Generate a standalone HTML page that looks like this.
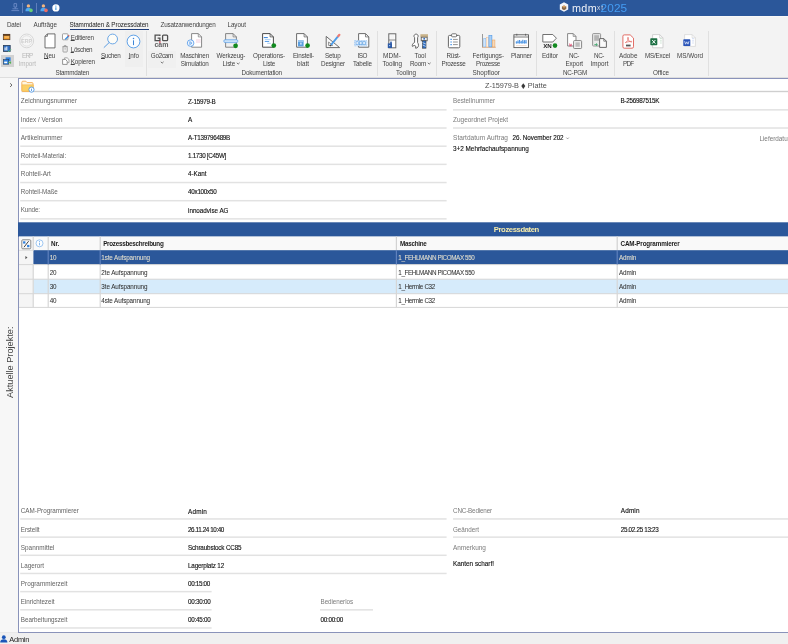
<!DOCTYPE html>
<html><head><meta charset="utf-8"><title>mdm 2025</title>
<style>
html,body{margin:0;padding:0;overflow:hidden}
body{width:788px;height:644px;position:relative;overflow:hidden;background:#fff;font-family:"Liberation Sans",sans-serif}
#r{position:absolute;left:0;top:0;width:788px;height:644px;overflow:hidden;will-change:transform;filter:blur(0.35px)}
#r>div,#r>span,#r>svg{position:absolute;display:block}
#r>span{white-space:nowrap}
u{text-decoration:underline;text-decoration-skip-ink:none;text-underline-offset:0.3px;text-decoration-thickness:0.65px}
</style></head><body>
<div id="r">
<div style="left:0px;top:0px;width:788px;height:16px;background:#2b579a;"></div>
<div style="left:0px;top:16px;width:788px;height:62px;background:#f3f3f3;"></div>
<div style="left:0px;top:77px;width:788px;height:1px;background:#dedede;"></div>
<div style="left:0px;top:16px;width:788px;height:1px;background:#f8f8f8;"></div>
<div style="left:0px;top:78px;width:18px;height:555px;background:#f7f7f7;"></div>
<div style="left:0px;top:632px;width:18px;height:1px;background:#e9e9e9;"></div>
<div style="left:18px;top:78px;width:1px;height:555px;background:#8a93ba;"></div>
<div style="left:18px;top:78px;width:770px;height:1px;background:#8a93ba;"></div>
<div style="left:0px;top:633px;width:788px;height:11px;background:#f0f0f0;"></div>
<div style="left:18px;top:632px;width:770px;height:1px;background:#8a93ba;"></div>
<svg style="left:0;top:0" width="788" height="644" viewBox="0 0 788 644"><rect x="21.5" y="90.80" width="766.5" height="1.4" fill="#cfcfcf"/><rect x="20.2" y="109.10" width="426.40000000000003" height="1.5" fill="#e2e2e2"/><rect x="20.2" y="127.27" width="426.40000000000003" height="1.5" fill="#e2e2e2"/><rect x="20.2" y="145.44" width="426.40000000000003" height="1.5" fill="#e2e2e2"/><rect x="20.2" y="163.61" width="426.40000000000003" height="1.5" fill="#e2e2e2"/><rect x="20.2" y="181.78" width="426.40000000000003" height="1.5" fill="#e2e2e2"/><rect x="20.2" y="199.95" width="426.40000000000003" height="1.5" fill="#e2e2e2"/><rect x="20.2" y="218.12" width="426.40000000000003" height="1.5" fill="#e2e2e2"/><rect x="453" y="109.10" width="335" height="1.5" fill="#e2e2e2"/><rect x="453" y="127.27" width="335" height="1.5" fill="#e2e2e2"/><rect x="20.2" y="518.20" width="426.40000000000003" height="1.5" fill="#e2e2e2"/><rect x="20.2" y="536.37" width="426.40000000000003" height="1.5" fill="#e2e2e2"/><rect x="20.2" y="554.54" width="426.40000000000003" height="1.5" fill="#e2e2e2"/><rect x="20.2" y="572.71" width="426.40000000000003" height="1.5" fill="#e2e2e2"/><rect x="20.2" y="590.88" width="191.4" height="1.5" fill="#e2e2e2"/><rect x="20.2" y="609.05" width="191.4" height="1.5" fill="#e2e2e2"/><rect x="20.2" y="627.22" width="191.4" height="1.5" fill="#e2e2e2"/><rect x="320" y="609.10" width="53" height="1.5" fill="#e2e2e2"/><rect x="453" y="518.20" width="335" height="1.5" fill="#e2e2e2"/><rect x="453" y="536.37" width="335" height="1.5" fill="#e2e2e2"/></svg>
<span style="left:485.00px;top:80.70px;font-size:7.30px;line-height:10px;color:#505050;letter-spacing:-0.066px;">Z-15979-B</span>
<span style="left:527.80px;top:80.70px;font-size:7.30px;line-height:10px;color:#505050;letter-spacing:0.089px;">Platte</span>
<svg style="left:521.4px;top:82.6px;overflow:visible" width="5" height="6.4" viewBox="0 0 5 6.4"><path d="M2.3 0.2 L4.3 3.1 L2.3 6 L0.3 3.1 Z" fill="#3a3a3a"/></svg>
<span style="left:20.80px;top:96.40px;font-size:6.36px;line-height:10px;color:#636363;">Zeichnungsnummer</span>
<span style="left:188.00px;top:96.70px;font-size:6.30px;line-height:10px;color:#111;letter-spacing:-0.241px;-webkit-text-stroke:0.12px #111;">Z-15979-B</span>
<span style="left:20.80px;top:114.50px;font-size:6.30px;line-height:10px;color:#636363;">Index / Version</span>
<span style="left:188.00px;top:114.80px;font-size:6.40px;line-height:10px;color:#111;-webkit-text-stroke:0.12px #111;">A</span>
<span style="left:20.80px;top:132.70px;font-size:6.47px;line-height:10px;color:#636363;">Artikelnummer</span>
<span style="left:188.00px;top:133.00px;font-size:6.30px;line-height:10px;color:#111;letter-spacing:-0.299px;-webkit-text-stroke:0.12px #111;">A-T139796489B</span>
<span style="left:20.80px;top:151.00px;font-size:6.30px;line-height:10px;color:#636363;letter-spacing:-0.027px;">Rohteil-Material:</span>
<span style="left:188.00px;top:151.30px;font-size:6.30px;line-height:10px;color:#111;letter-spacing:-0.310px;-webkit-text-stroke:0.12px #111;">1.1730 [C45W]</span>
<span style="left:20.80px;top:169.00px;font-size:6.37px;line-height:10px;color:#636363;">Rohteil-Art</span>
<span style="left:188.00px;top:169.30px;font-size:6.30px;line-height:10px;color:#111;letter-spacing:-0.010px;-webkit-text-stroke:0.12px #111;">4-Kant</span>
<span style="left:20.80px;top:187.10px;font-size:6.30px;line-height:10px;color:#636363;letter-spacing:-0.068px;">Rohteil-Maße</span>
<span style="left:188.00px;top:187.40px;font-size:6.30px;line-height:10px;color:#111;letter-spacing:-0.258px;-webkit-text-stroke:0.12px #111;">40x100x50</span>
<span style="left:20.80px;top:205.20px;font-size:6.30px;line-height:10px;color:#636363;letter-spacing:-0.128px;">Kunde:</span>
<span style="left:188.00px;top:205.50px;font-size:6.30px;line-height:10px;color:#111;letter-spacing:-0.010px;-webkit-text-stroke:0.12px #111;">innoadvise AG</span>
<span style="left:453.00px;top:96.40px;font-size:6.30px;line-height:10px;color:#7a7a7a;">Bestellnummer</span>
<span style="left:620.50px;top:96.40px;font-size:6.30px;line-height:10px;color:#111;letter-spacing:-0.278px;-webkit-text-stroke:0.12px #111;">B-256987515K</span>
<span style="left:453.00px;top:114.60px;font-size:6.47px;line-height:10px;color:#7a7a7a;">Zugeordnet Projekt</span>
<span style="left:453.00px;top:132.90px;font-size:6.50px;line-height:10px;color:#7a7a7a;letter-spacing:0.045px;">Startdatum Auftrag</span>
<span style="left:512.50px;top:133.40px;font-size:6.30px;line-height:10px;color:#111;letter-spacing:-0.046px;-webkit-text-stroke:0.12px #111;">26. November 202</span>
<span style="left:759.40px;top:133.60px;font-size:6.36px;line-height:10px;color:#7a7a7a;">Lieferdatum</span>
<span style="left:453.00px;top:144.40px;font-size:6.37px;line-height:10px;color:#111;-webkit-text-stroke:0.12px #111;">3+2 Mehrfachaufspannung</span>
<svg style="left:566px;top:136.8px;overflow:visible" width="4" height="3" viewBox="0 0 4 3"><path d="M0.4 0.6 L1.6 1.9 L2.8 0.6" fill="none" stroke="#777" stroke-width="0.7"/></svg>
<span style="left:20.80px;top:506.20px;font-size:6.31px;line-height:10px;color:#636363;">CAM-Programmierer</span>
<span style="left:188.00px;top:506.50px;font-size:6.40px;line-height:10px;color:#111;letter-spacing:0.172px;-webkit-text-stroke:0.12px #111;">Admin</span>
<span style="left:20.80px;top:524.60px;font-size:6.30px;line-height:10px;color:#636363;letter-spacing:-0.069px;">Erstellt</span>
<span style="left:188.00px;top:524.90px;font-size:6.30px;line-height:10px;color:#111;letter-spacing:-0.398px;-webkit-text-stroke:0.12px #111;">26.11.24 10:40</span>
<span style="left:20.80px;top:542.50px;font-size:6.38px;line-height:10px;color:#636363;">Spannmittel</span>
<span style="left:188.00px;top:542.80px;font-size:6.30px;line-height:10px;color:#111;letter-spacing:-0.149px;-webkit-text-stroke:0.12px #111;">Schraubstock CC85</span>
<span style="left:20.80px;top:560.70px;font-size:6.30px;line-height:10px;color:#636363;letter-spacing:-0.033px;">Lagerort</span>
<span style="left:188.00px;top:561.00px;font-size:6.30px;line-height:10px;color:#111;letter-spacing:-0.168px;-webkit-text-stroke:0.12px #111;">Lagerplatz 12</span>
<span style="left:20.80px;top:578.70px;font-size:6.37px;line-height:10px;color:#636363;">Programmierzeit</span>
<span style="left:188.00px;top:579.00px;font-size:6.30px;line-height:10px;color:#111;letter-spacing:-0.315px;-webkit-text-stroke:0.12px #111;">00:15:00</span>
<span style="left:20.80px;top:597.00px;font-size:6.30px;line-height:10px;color:#636363;letter-spacing:-0.047px;">Einrichtezeit</span>
<span style="left:188.00px;top:597.30px;font-size:6.30px;line-height:10px;color:#111;letter-spacing:-0.253px;-webkit-text-stroke:0.12px #111;">00:30:00</span>
<span style="left:20.80px;top:615.10px;font-size:6.30px;line-height:10px;color:#636363;letter-spacing:-0.014px;">Bearbeitungszeit</span>
<span style="left:188.00px;top:615.40px;font-size:6.30px;line-height:10px;color:#111;letter-spacing:-0.253px;-webkit-text-stroke:0.12px #111;">00:45:00</span>
<span style="left:320.50px;top:597.30px;font-size:6.30px;line-height:10px;color:#7a7a7a;letter-spacing:-0.070px;">Bedienerlos</span>
<span style="left:320.50px;top:615.10px;font-size:6.30px;line-height:10px;color:#111;letter-spacing:-0.253px;-webkit-text-stroke:0.12px #111;">00:00:00</span>
<span style="left:453.00px;top:506.30px;font-size:6.30px;line-height:10px;color:#7a7a7a;letter-spacing:-0.164px;">CNC-Bediener</span>
<span style="left:620.80px;top:506.30px;font-size:6.40px;line-height:10px;color:#111;letter-spacing:0.132px;-webkit-text-stroke:0.12px #111;">Admin</span>
<span style="left:453.00px;top:524.60px;font-size:6.30px;line-height:10px;color:#7a7a7a;letter-spacing:-0.033px;">Geändert</span>
<span style="left:620.80px;top:524.60px;font-size:6.30px;line-height:10px;color:#111;letter-spacing:-0.310px;-webkit-text-stroke:0.12px #111;">25.02.25 13:23</span>
<span style="left:453.00px;top:542.60px;font-size:6.45px;line-height:10px;color:#7a7a7a;">Anmerkung</span>
<span style="left:453.00px;top:558.50px;font-size:6.36px;line-height:10px;color:#111;-webkit-text-stroke:0.12px #111;">Kanten scharf!</span>
<span style="left:5.2px;top:398px;font-size:9.2px;line-height:11px;color:#444;transform-origin:0 0;transform:rotate(-90deg);width:71.5px">Aktuelle Projekte:</span>
<svg style="left:9px;top:82px;overflow:visible" width="5" height="7" viewBox="0 0 5 7"><path d="M1.1 1.3 L3 3.1 L1.1 4.9" fill="none" stroke="#555" stroke-width="0.9"/></svg>
<svg style="left:0px;top:635.3px;overflow:visible" width="8" height="8" viewBox="0 0 8 8"><circle cx="3.8" cy="2.2" r="1.9" fill="#1a55b8"/><path d="M0.2 7.6 C0.2 4.8 1.7 4.2 3.8 4.2 C5.9 4.2 7.4 4.8 7.4 7.6 Z" fill="#1a55b8"/></svg>
<span style="left:9.20px;top:634.60px;font-size:7.40px;line-height:10px;color:#222;letter-spacing:-0.175px;">Admin</span>
<svg style="left:0px;top:0px;overflow:visible" width="788" height="644" viewBox="0 0 788 644"><rect x="18" y="222.3" width="770" height="14.3" fill="#2b579a"/><rect x="19" y="236.6" width="769" height="13.6" fill="#f9f9f9"/><rect x="19" y="250.2" width="14.4" height="57.2" fill="#f5f5f5"/><rect x="33.4" y="250.2" width="754.6" height="14.400000000000034" fill="#2b579a"/><rect x="33.4" y="279.2" width="754.6" height="14.5" fill="#d6ebfb"/><rect x="19" y="264.1" width="769" height="1" fill="#d6d6d6"/><rect x="19" y="278.7" width="769" height="1" fill="#d6d6d6"/><rect x="19" y="293.2" width="769" height="1" fill="#d6d6d6"/><rect x="19" y="306.9" width="769" height="1" fill="#d6d6d6"/><rect x="19" y="249.8" width="14.4" height="0.9" fill="#d9d9d9"/><rect x="32.6" y="236.4" width="1.2" height="13.8" fill="#d2d2d2"/><rect x="32.6" y="264.6" width="1.2" height="42.799999999999955" fill="#d6d6d6"/><rect x="47.6" y="236.4" width="1.2" height="13.8" fill="#d2d2d2"/><rect x="47.6" y="264.6" width="1.2" height="42.799999999999955" fill="#d6d6d6"/><rect x="47.6" y="250.2" width="1.2" height="14.400000000000034" fill="#5f81bd"/><rect x="99.60000000000001" y="236.4" width="1.2" height="13.8" fill="#d2d2d2"/><rect x="99.60000000000001" y="264.6" width="1.2" height="42.799999999999955" fill="#d6d6d6"/><rect x="99.60000000000001" y="250.2" width="1.2" height="14.400000000000034" fill="#5f81bd"/><rect x="395.79999999999995" y="236.4" width="1.2" height="13.8" fill="#d2d2d2"/><rect x="395.79999999999995" y="264.6" width="1.2" height="42.799999999999955" fill="#d6d6d6"/><rect x="395.79999999999995" y="250.2" width="1.2" height="14.400000000000034" fill="#5f81bd"/><rect x="616.6" y="236.4" width="1.2" height="13.8" fill="#d2d2d2"/><rect x="616.6" y="264.6" width="1.2" height="42.799999999999955" fill="#d6d6d6"/><rect x="616.6" y="250.2" width="1.2" height="14.400000000000034" fill="#5f81bd"/></svg>
<span style="left:493.80px;top:224.70px;font-size:7.70px;line-height:10px;color:#f6ebaa;letter-spacing:-0.406px;font-weight:bold;">Prozessdaten</span>
<span style="left:51.00px;top:238.50px;font-size:6.30px;line-height:10px;color:#1a1a1a;letter-spacing:-0.035px;font-weight:bold;">Nr.</span>
<span style="left:103.20px;top:238.50px;font-size:6.30px;line-height:10px;color:#1a1a1a;letter-spacing:-0.272px;font-weight:bold;">Prozessbeschreibung</span>
<span style="left:400.00px;top:238.50px;font-size:6.30px;line-height:10px;color:#1a1a1a;letter-spacing:-0.276px;font-weight:bold;">Maschine</span>
<span style="left:620.50px;top:238.50px;font-size:6.30px;line-height:10px;color:#1a1a1a;letter-spacing:-0.154px;font-weight:bold;">CAM-Programmierer</span>
<span style="left:49.80px;top:252.90px;font-size:6.30px;line-height:10px;color:#e6e1cf;letter-spacing:-0.254px;-webkit-text-stroke:0.05px #e6e1cf;">10</span>
<span style="left:101.30px;top:252.90px;font-size:6.30px;line-height:10px;color:#e6e1cf;letter-spacing:-0.109px;-webkit-text-stroke:0.05px #e6e1cf;">1ste Aufspannung</span>
<span style="left:398.30px;top:252.90px;font-size:6.30px;line-height:10px;color:#e6e1cf;letter-spacing:-0.388px;-webkit-text-stroke:0.05px #e6e1cf;">1_FEHLMANN PICOMAX 550</span>
<span style="left:619.00px;top:252.90px;font-size:6.30px;line-height:10px;color:#e6e1cf;letter-spacing:-0.131px;-webkit-text-stroke:0.05px #e6e1cf;">Admin</span>
<span style="left:49.80px;top:267.70px;font-size:6.30px;line-height:10px;color:#333;letter-spacing:-0.254px;-webkit-text-stroke:0.05px #333;">20</span>
<span style="left:101.30px;top:267.70px;font-size:6.30px;line-height:10px;color:#333;letter-spacing:-0.073px;-webkit-text-stroke:0.05px #333;">2te Aufspannung</span>
<span style="left:398.30px;top:267.70px;font-size:6.30px;line-height:10px;color:#333;letter-spacing:-0.388px;-webkit-text-stroke:0.05px #333;">1_FEHLMANN PICOMAX 550</span>
<span style="left:619.00px;top:267.70px;font-size:6.30px;line-height:10px;color:#333;letter-spacing:-0.131px;-webkit-text-stroke:0.05px #333;">Admin</span>
<span style="left:49.80px;top:282.20px;font-size:6.30px;line-height:10px;color:#333;letter-spacing:-0.254px;-webkit-text-stroke:0.05px #333;">30</span>
<span style="left:101.30px;top:282.20px;font-size:6.30px;line-height:10px;color:#333;letter-spacing:-0.073px;-webkit-text-stroke:0.05px #333;">3te Aufspannung</span>
<span style="left:398.30px;top:282.20px;font-size:6.30px;line-height:10px;color:#333;letter-spacing:-0.327px;-webkit-text-stroke:0.05px #333;">1_Hermle C32</span>
<span style="left:619.00px;top:282.20px;font-size:6.30px;line-height:10px;color:#333;letter-spacing:-0.131px;-webkit-text-stroke:0.05px #333;">Admin</span>
<span style="left:49.80px;top:296.00px;font-size:6.30px;line-height:10px;color:#333;letter-spacing:-0.254px;-webkit-text-stroke:0.05px #333;">40</span>
<span style="left:101.30px;top:296.00px;font-size:6.30px;line-height:10px;color:#333;letter-spacing:-0.109px;-webkit-text-stroke:0.05px #333;">4ste Aufspannung</span>
<span style="left:398.30px;top:296.00px;font-size:6.30px;line-height:10px;color:#333;letter-spacing:-0.327px;-webkit-text-stroke:0.05px #333;">1_Hermle C32</span>
<span style="left:619.00px;top:296.00px;font-size:6.30px;line-height:10px;color:#333;letter-spacing:-0.131px;-webkit-text-stroke:0.05px #333;">Admin</span>
<svg style="left:24.6px;top:255.2px;overflow:visible" width="4" height="6" viewBox="0 0 4 6"><path d="M0.4 0.9 L2.5 2.6 L0.4 4.3 Z" fill="#555"/></svg>
<svg style="left:559px;top:2px;overflow:visible" width="10" height="10" viewBox="0 0 10 10"><path d="M5 0.3 L9.2 2.6 L9.2 7.4 L5 9.7 L0.8 7.4 L0.8 2.6 Z" fill="#f4f6fb"/><path d="M5 3.4 L7.3 4.6 L7.3 7 L5 8.2 L2.9 7 L2.9 4.6 Z" fill="#8a6a4a"/><path d="M5 3.4 L7.3 4.6 L5 5.8 L2.9 4.6 Z" fill="#d9a465"/></svg>
<span style="left:572.00px;top:2.00px;font-size:10.80px;line-height:12px;color:#eef1f7;letter-spacing:0.333px;font-weight:normal;">mdm</span>
<span style="left:597.00px;top:4.20px;font-size:6.50px;line-height:8px;color:#d9dde6;letter-spacing:0.972px;">xt</span>
<span style="left:600.50px;top:1.60px;font-size:11.80px;line-height:12px;color:#449cf4;letter-spacing:0.137px;">2025</span>
<svg style="left:10.6px;top:3.4px;overflow:visible" width="9" height="9" viewBox="0 0 9 9"><path d="M3 0.6 H5.6 V4 H3 Z M1.4 5.8 H7.2 M4.3 4 V5.8 M0.4 7.6 H8.2" fill="none" stroke="#6c8ac6" stroke-width="0.9"/></svg>
<div style="left:22px;top:2.5px;width:1px;height:10.5px;background:#5f7fbd;"></div>
<svg style="left:25.4px;top:3.6px;overflow:visible" width="9" height="9" viewBox="0 0 9 9"><circle cx="3.4" cy="1.9" r="1.7" fill="#f3b57e"/><path d="M0.4 7.2 C0.4 4.6 1.6 3.8 3.4 3.8 C5.2 3.8 6.4 4.6 6.4 7.2 Z" fill="#4fa8f2"/><circle cx="6" cy="6.4" r="1.8" fill="#67cf74"/></svg>
<div style="left:36px;top:2.5px;width:1px;height:10.5px;background:#5f7fbd;"></div>
<svg style="left:40px;top:3.6px;overflow:visible" width="9" height="9" viewBox="0 0 9 9"><circle cx="3.4" cy="1.9" r="1.7" fill="#f3b57e"/><path d="M0.4 7.2 C0.4 4.6 1.6 3.8 3.4 3.8 C5.2 3.8 6.4 4.6 6.4 7.2 Z" fill="#4fa8f2"/><circle cx="6" cy="6.4" r="1.8" fill="#ef6b62"/></svg>
<svg style="left:51.6px;top:3.9px;overflow:visible" width="8" height="8" viewBox="0 0 8 8"><circle cx="3.9" cy="3.9" r="3.6" fill="#fff"/><rect x="3.4" y="3.3" width="1" height="2.7" fill="#2b8fe0"/><circle cx="3.9" cy="2.1" r="0.6" fill="#2b8fe0"/></svg>
<span style="left:7.00px;top:19.90px;font-size:6.30px;line-height:10px;color:#444;letter-spacing:-0.181px;">Datei</span>
<span style="left:33.50px;top:19.90px;font-size:6.30px;line-height:10px;color:#444;letter-spacing:-0.039px;">Aufträge</span>
<span style="left:69.50px;top:19.90px;font-size:6.30px;line-height:10px;color:#222;letter-spacing:-0.118px;">Stammdaten &amp; Prozessdaten</span>
<span style="left:160.50px;top:19.90px;font-size:6.30px;line-height:10px;color:#444;letter-spacing:-0.206px;">Zusatzanwendungen</span>
<span style="left:227.50px;top:19.90px;font-size:6.30px;line-height:10px;color:#444;letter-spacing:-0.069px;">Layout</span>
<div style="left:69.5px;top:29px;width:79px;height:1px;background:#1f3c78;"></div>
<div style="left:146px;top:31px;width:1px;height:45px;background:#e0e0e0;"></div>
<div style="left:377px;top:31px;width:1px;height:45px;background:#e0e0e0;"></div>
<div style="left:436px;top:31px;width:1px;height:45px;background:#e0e0e0;"></div>
<div style="left:536px;top:31px;width:1px;height:45px;background:#e0e0e0;"></div>
<div style="left:614px;top:31px;width:1px;height:45px;background:#e0e0e0;"></div>
<div style="left:708px;top:31px;width:1px;height:45px;background:#e0e0e0;"></div>
<div style="left:125px;top:31px;width:18px;height:36px;background:#efefef;"></div>
<div style="left:148px;top:51px;width:28px;height:17px;background:#f0f0f0;"></div>
<div style="left:1px;top:55px;width:13px;height:12px;background:#d2d2d2;"></div>
<span style="left:22.00px;top:50.60px;font-size:6.30px;line-height:10px;color:#b9b9b9;letter-spacing:-0.818px;">ERP</span>
<span style="left:18.50px;top:58.60px;font-size:6.30px;line-height:10px;color:#b9b9b9;letter-spacing:-0.059px;">Import</span>
<span style="left:44.00px;top:50.60px;font-size:6.30px;line-height:10px;color:#444;letter-spacing:-0.186px;"><u>N</u>eu</span>
<span style="left:70.70px;top:32.50px;font-size:6.30px;line-height:10px;color:#444;letter-spacing:-0.185px;"><u>E</u>ditieren</span>
<span style="left:70.70px;top:44.70px;font-size:6.30px;line-height:10px;color:#444;letter-spacing:-0.317px;"><u>L</u>öschen</span>
<span style="left:70.70px;top:56.50px;font-size:6.30px;line-height:10px;color:#444;letter-spacing:-0.115px;"><u>K</u>opieren</span>
<span style="left:55.50px;top:68.40px;font-size:6.30px;line-height:10px;color:#444;letter-spacing:-0.222px;">Stammdaten</span>
<span style="left:101.00px;top:50.60px;font-size:6.30px;line-height:10px;color:#444;letter-spacing:-0.345px;"><u>S</u>uchen</span>
<span style="left:128.60px;top:50.60px;font-size:6.30px;line-height:10px;color:#444;letter-spacing:-0.027px;"><u>I</u>nfo</span>
<span style="left:150.80px;top:50.60px;font-size:6.30px;line-height:10px;color:#444;letter-spacing:-0.268px;">Go2cam</span>
<span style="left:180.30px;top:50.60px;font-size:6.30px;line-height:10px;color:#444;letter-spacing:-0.196px;">Maschinen</span>
<span style="left:180.80px;top:58.60px;font-size:6.30px;line-height:10px;color:#444;letter-spacing:-0.161px;">Simulation</span>
<span style="left:216.60px;top:50.60px;font-size:6.30px;line-height:10px;color:#444;letter-spacing:-0.194px;">Werkzeug-</span>
<span style="left:222.60px;top:58.60px;font-size:6.30px;line-height:10px;color:#444;letter-spacing:-0.182px;">Liste</span>
<span style="left:253.00px;top:50.60px;font-size:6.30px;line-height:10px;color:#444;letter-spacing:-0.083px;">Operations-</span>
<span style="left:263.00px;top:58.60px;font-size:6.30px;line-height:10px;color:#444;letter-spacing:-0.262px;">Liste</span>
<span style="left:293.00px;top:50.60px;font-size:6.30px;line-height:10px;color:#444;letter-spacing:-0.156px;">Einstell-</span>
<span style="left:297.00px;top:58.60px;font-size:6.35px;line-height:10px;color:#444;">blatt</span>
<span style="left:325.00px;top:50.60px;font-size:6.30px;line-height:10px;color:#444;letter-spacing:-0.193px;">Setup</span>
<span style="left:321.00px;top:58.60px;font-size:6.30px;line-height:10px;color:#444;letter-spacing:-0.152px;">Designer</span>
<span style="left:357.50px;top:50.60px;font-size:6.30px;line-height:10px;color:#444;letter-spacing:-0.451px;">ISO</span>
<span style="left:353.00px;top:58.60px;font-size:6.30px;line-height:10px;color:#444;letter-spacing:-0.138px;">Tabelle</span>
<span style="left:241.50px;top:68.40px;font-size:6.30px;line-height:10px;color:#444;letter-spacing:-0.144px;">Dokumentation</span>
<span style="left:383.00px;top:50.60px;font-size:6.50px;line-height:10px;color:#444;letter-spacing:0.078px;">MDM-</span>
<span style="left:382.50px;top:58.60px;font-size:6.30px;line-height:10px;color:#444;letter-spacing:-0.066px;">Tooling</span>
<span style="left:414.50px;top:50.60px;font-size:6.30px;line-height:10px;color:#444;letter-spacing:-0.014px;">Tool</span>
<span style="left:410.00px;top:58.60px;font-size:6.30px;line-height:10px;color:#444;letter-spacing:-0.201px;">Room</span>
<span style="left:396.00px;top:68.40px;font-size:6.31px;line-height:10px;color:#444;">Tooling</span>
<span style="left:446.50px;top:50.60px;font-size:6.30px;line-height:10px;color:#444;letter-spacing:-0.210px;">Rüst-</span>
<span style="left:441.50px;top:58.60px;font-size:6.30px;line-height:10px;color:#444;letter-spacing:-0.283px;">Prozesse</span>
<span style="left:472.50px;top:50.60px;font-size:6.30px;line-height:10px;color:#444;letter-spacing:-0.033px;">Fertigungs-</span>
<span style="left:476.00px;top:58.60px;font-size:6.30px;line-height:10px;color:#444;letter-spacing:-0.283px;">Prozesse</span>
<span style="left:472.50px;top:68.40px;font-size:6.42px;line-height:10px;color:#444;">Shopfloor</span>
<span style="left:511.00px;top:50.60px;font-size:6.30px;line-height:10px;color:#444;letter-spacing:-0.102px;">Planner</span>
<span style="left:542.00px;top:50.60px;font-size:6.30px;line-height:10px;color:#444;letter-spacing:-0.076px;">Editor</span>
<span style="left:569.00px;top:50.60px;font-size:6.30px;line-height:10px;color:#444;letter-spacing:-0.399px;">NC-</span>
<span style="left:565.50px;top:58.60px;font-size:6.30px;line-height:10px;color:#444;letter-spacing:-0.118px;">Export</span>
<span style="left:594.00px;top:50.60px;font-size:6.30px;line-height:10px;color:#444;letter-spacing:-0.399px;">NC-</span>
<span style="left:590.50px;top:58.60px;font-size:6.35px;line-height:10px;color:#444;">Import</span>
<span style="left:563.00px;top:68.40px;font-size:6.30px;line-height:10px;color:#444;letter-spacing:-0.258px;">NC-PGM</span>
<span style="left:619.00px;top:50.60px;font-size:6.40px;line-height:10px;color:#444;">Adobe</span>
<span style="left:623.00px;top:58.60px;font-size:6.30px;line-height:10px;color:#444;letter-spacing:-0.700px;">PDF</span>
<span style="left:645.00px;top:50.60px;font-size:6.30px;line-height:10px;color:#444;letter-spacing:-0.201px;">MS/Excel</span>
<span style="left:677.00px;top:50.60px;font-size:6.30px;line-height:10px;color:#444;letter-spacing:-0.020px;">MS/Word</span>
<span style="left:653.00px;top:68.40px;font-size:6.30px;line-height:10px;color:#444;letter-spacing:-0.057px;">Office</span>
<svg style="left:159.5px;top:61.2px;overflow:visible" width="4.4" height="3" viewBox="0 0 4.4 3"><path d="M0.8 0.8 L2.2 2.1 L3.6 0.8" fill="none" stroke="#555" stroke-width="0.8"/></svg>
<svg style="left:236.3px;top:62.2px;overflow:visible" width="4.4" height="3" viewBox="0 0 4.4 3"><path d="M0.8 0.8 L2.2 2.1 L3.6 0.8" fill="none" stroke="#555" stroke-width="0.8"/></svg>
<svg style="left:427.3px;top:62.2px;overflow:visible" width="4.4" height="3" viewBox="0 0 4.4 3"><path d="M0.8 0.8 L2.2 2.1 L3.6 0.8" fill="none" stroke="#555" stroke-width="0.8"/></svg>
<svg style="left:3px;top:33.6px;overflow:visible" width="8" height="6" viewBox="0 0 8 6"><rect x="0.3" y="0.3" width="6.6" height="5.4" fill="#ef9b2d" stroke="#4a3322" stroke-width="0.7"/><rect x="0.3" y="0.3" width="6.6" height="1.4" fill="#4a3322"/><rect x="1.6" y="2.6" width="4.4" height="0.9" fill="#fbd08a"/></svg>
<svg style="left:3px;top:44.6px;overflow:visible" width="9" height="8" viewBox="0 0 9 8"><rect x="0.4" y="0.4" width="6.8" height="6" fill="#2f6fc4" stroke="#2a3d55" stroke-width="0.8"/><rect x="1.6" y="2.4" width="1" height="3" fill="#fff"/><rect x="3.3" y="1.6" width="1" height="3.8" fill="#fff"/><path d="M4.6 5.6 L5.8 6.8 L8 4.2" fill="none" stroke="#5fc08a" stroke-width="1"/></svg>
<svg style="left:3px;top:57px;overflow:visible" width="9" height="8" viewBox="0 0 9 8"><rect x="2.6" y="0.3" width="5" height="4" fill="#2f80dc"/><rect x="0.3" y="2.6" width="5.4" height="4.6" fill="#2f80dc" stroke="#28405f" stroke-width="0.6"/><rect x="1.2" y="4.6" width="3" height="1.6" fill="#fff"/><path d="M5.4 5.6 h2.6 M6.9 4.5 l1.2 1.1 l-1.2 1.1" stroke="#4cae4c" stroke-width="0.9" fill="none"/></svg>
<svg style="left:19px;top:32.6px;overflow:visible" width="16" height="16" viewBox="0 0 16 16"><circle cx="7.7" cy="7.9" r="6.9" fill="#f6f6f6" stroke="#d2d2d2" stroke-width="0.9"/><circle cx="7.7" cy="7.9" r="5.2" fill="none" stroke="#d9d9d9" stroke-width="0.7"/><text x="7.7" y="9.9" font-family="Liberation Sans" font-weight="bold" font-size="5.2" text-anchor="middle" fill="#cfcfcf">ERP</text></svg>
<svg style="left:43.5px;top:33.1px;overflow:visible" width="13" height="16" viewBox="0 0 13 16"><path d="M3.4 0.9 H11 V14.9 H1 V3.3 Z" fill="#fff" stroke="#4c4c4c" stroke-width="0.8" stroke-linejoin="miter"/><path d="M3.4 0.9 V3.3 H1" fill="none" stroke="#484848" stroke-width="0.7"/></svg>
<svg style="left:62px;top:33.2px;overflow:visible" width="8" height="8" viewBox="0 0 8 8"><rect x="0.5" y="0.8" width="5.4" height="6" rx="0.6" fill="#fff" stroke="#8a8a8a" stroke-width="0.8"/><path d="M3.2 6.4 L6.6 3" stroke="#2f86e0" stroke-width="1.3"/><path d="M6.3 3.3 L7.2 2.4" stroke="#e0524a" stroke-width="1.3"/></svg>
<svg style="left:62px;top:45.0px;overflow:visible" width="7" height="8" viewBox="0 0 7 8"><path d="M0.4 1.6 H5.8 M2.2 1.6 V0.6 H4 V1.6" fill="none" stroke="#8a8a8a" stroke-width="0.7"/><rect x="1" y="1.8" width="4.2" height="5.2" rx="0.5" fill="#f7f7f7" stroke="#8a8a8a" stroke-width="0.8"/><path d="M2.4 3.4 H3.9 M2.4 4.8 H3.9" stroke="#9a9a9a" stroke-width="0.6"/></svg>
<svg style="left:62px;top:57.2px;overflow:visible" width="8" height="8" viewBox="0 0 8 8"><path d="M2.6 2 V0.8 H5.2 L7 2.6 V5.6 H5.4" fill="#fafafa" stroke="#8a8a8a" stroke-width="0.7"/><path d="M0.6 2.4 H3.4 L5.2 4.2 V7.4 H0.6 Z" fill="#fff" stroke="#7a7a7a" stroke-width="0.8"/></svg>
<svg style="left:102.9px;top:33.4px;overflow:visible" width="16" height="16" viewBox="0 0 16 16"><circle cx="9.6" cy="6" r="4.9" fill="#fdfcf7" stroke="#5b9de3" stroke-width="0.9"/><path d="M6.1 9.6 L1.1 14.4" stroke="#5b9de3" stroke-width="1" stroke-linecap="round"/></svg>
<svg style="left:126.1px;top:33.5px;overflow:visible" width="16" height="16" viewBox="0 0 16 16"><circle cx="7.5" cy="7.5" r="6.4" fill="#fbfdff" stroke="#4f97e4" stroke-width="0.9"/><rect x="7" y="6.3" width="1" height="4.8" fill="#3d86d8"/><circle cx="7.5" cy="4.5" r="0.75" fill="#3d86d8"/></svg>
<svg style="left:154px;top:34.1px;overflow:visible" width="16" height="16" viewBox="0 0 16 16"><path d="M5.9 2 V1.1 H1.1 V6.7 H5.9 V4.1 H3.6" fill="none" stroke="#505050" stroke-width="1.3"/><rect x="8.6" y="1.1" width="5" height="5.6" rx="0.9" fill="none" stroke="#505050" stroke-width="1.3"/><text x="7.4" y="14.1" font-family="Liberation Sans" font-weight="bold" font-size="7" text-anchor="middle" fill="#626262" textLength="14" lengthAdjust="spacingAndGlyphs" dy="-1.1">cam</text><circle cx="5.9" cy="8" r="0.9" fill="#d45a6c"/></svg>
<svg style="left:190.5px;top:33.2px;overflow:visible" width="15.2" height="17.8" viewBox="0 0 15.2 17.8"><path d="M0.6 0.6 H7.299999999999999 L10.6 3.9 V14.200000000000001 H0.6 Z" fill="#fff" stroke="#7d7d7d" stroke-width="0.9" stroke-linejoin="round"/><path d="M7.299999999999999 0.6 V3.9 H10.6" fill="none" stroke="#7d7d7d" stroke-width="0.7200000000000001"/><rect x="5" y="6" width="4.6" height="4" fill="#f9e6ee"/><circle cx="0" cy="9.8" r="0" /></svg>
<svg style="left:186px;top:39.1px;overflow:visible" width="9" height="9" viewBox="0 0 9 9"><circle cx="4.6" cy="4.1" r="3.3" fill="#eef5fd" stroke="#4f97e8" stroke-width="0.8"/><path d="M3.8 2.6 L6 4.1 L3.8 5.6 Z" fill="none" stroke="#4f97e8" stroke-width="0.7"/></svg>
<svg style="left:225px;top:33.2px;overflow:visible" width="16" height="17.8" viewBox="0 0 16 17.8"><path d="M0.6 0.6 H8.1 L11.4 3.9 V14.200000000000001 H0.6 Z" fill="#f0f0f0" stroke="#787878" stroke-width="0.9" stroke-linejoin="round"/><path d="M8.1 0.6 V3.9 H11.4" fill="none" stroke="#787878" stroke-width="0.7200000000000001"/><rect x="-1.2" y="6.7" width="14" height="2.9" rx="1.3" fill="#c9e1f8" stroke="#5a9fe8" stroke-width="0.7"/><circle cx="10.6" cy="12.8" r="2.35" fill="#118a1f"/></svg>
<svg style="left:262px;top:33.2px;overflow:visible" width="16" height="17.8" viewBox="0 0 16 17.8"><path d="M0.6 0.6 H8.1 L11.4 3.9 V14.200000000000001 H0.6 Z" fill="#fff" stroke="#4a4a4a" stroke-width="1.0" stroke-linejoin="round"/><path d="M8.1 0.6 V3.9 H11.4" fill="none" stroke="#4a4a4a" stroke-width="0.8"/><path d="M1.8 4.6 H5.8" stroke="#2f7fdc" stroke-width="1"/><path d="M2.8 6.7 H8.6 M5.2 10.3 H8.8" stroke="#9cc6f0" stroke-width="0.9"/><path d="M2.8 8.5 H7.2" stroke="#4a95e6" stroke-width="0.9"/><circle cx="11.8" cy="12.6" r="2.35" fill="#118a1f"/></svg>
<svg style="left:296px;top:33.2px;overflow:visible" width="16" height="17.8" viewBox="0 0 16 17.8"><path d="M0.6 0.6 H8.1 L11.4 3.9 V14.200000000000001 H0.6 Z" fill="#fff" stroke="#6a6a6a" stroke-width="1.0" stroke-linejoin="round"/><path d="M8.1 0.6 V3.9 H11.4" fill="none" stroke="#6a6a6a" stroke-width="0.8"/><rect x="2" y="7.4" width="5.6" height="6" fill="#5a9fe0"/><rect x="2" y="7.4" width="5.6" height="1.6" fill="#9cc6ee"/><rect x="4.2" y="9.6" width="1.4" height="2" fill="#d8e9fa"/><circle cx="11.6" cy="12.6" r="2.35" fill="#118a1f"/></svg>
<svg style="left:325px;top:32.6px;overflow:visible" width="17" height="17" viewBox="0 0 17 17"><path d="M1.2 3.4 L14.6 14.6 H1.2 Z" fill="#f7f7f7" stroke="#5c5c5c" stroke-width="0.9" stroke-linejoin="round"/><path d="M3.6 9 L7.6 12.4 H3.6 Z" fill="#fff" stroke="#666" stroke-width="0.7"/><path d="M6 12 L13.2 3.2" stroke="#4a9be8" stroke-width="1.9"/><path d="M13.2 3.2 L14.4 1.8" stroke="#ee7b74" stroke-width="2.2" stroke-linecap="round"/><path d="M6 12 L5 13.2" stroke="#444" stroke-width="1.2"/></svg>
<svg style="left:358px;top:33.2px;overflow:visible" width="15.4" height="17.8" viewBox="0 0 15.4 17.8"><path d="M0.6 0.6 H7.5 L10.8 3.9 V14.200000000000001 H0.6 Z" fill="#fff" stroke="#6a6a6a" stroke-width="1.0" stroke-linejoin="round"/><path d="M7.5 0.6 V3.9 H10.8" fill="none" stroke="#6a6a6a" stroke-width="0.8"/></svg>
<svg style="left:354px;top:39.6px;overflow:visible" width="14" height="7" viewBox="0 0 14 7"><rect x="0.5" y="0.5" width="12.4" height="5.4" fill="#dbeafb" stroke="#9ec7f2" stroke-width="0.7" stroke-dasharray="1.6 0.6"/><rect x="2" y="1.7" width="2.6" height="3" fill="none" stroke="#6aa8e8" stroke-width="0.6"/><rect x="5.4" y="1.7" width="2.6" height="3" fill="none" stroke="#5a9fe0" stroke-width="0.6"/><rect x="8.8" y="1.7" width="2.6" height="3" fill="none" stroke="#5a9fe0" stroke-width="0.6"/></svg>
<svg style="left:386px;top:33.0px;overflow:visible" width="12" height="16" viewBox="0 0 12 16"><rect x="2.8" y="0.8" width="7" height="14" fill="#fff" stroke="#666" stroke-width="1"/><path d="M2.8 7 H9.8" stroke="#666" stroke-width="0.8"/><rect x="4.2" y="2" width="4.2" height="4" fill="#f4f4f4"/><rect x="1.8" y="10.4" width="4.2" height="4.6" fill="#2d5aa6"/><rect x="4.2" y="8.6" width="1.6" height="2.4" fill="#2d5aa6"/><rect x="3" y="12" width="1.2" height="1.2" fill="#9cc0f0"/></svg>
<svg style="left:410.5px;top:32.6px;overflow:visible" width="18" height="17" viewBox="0 0 18 17"><path d="M4.6 1.2 C3 1.6 2.4 3.4 3.6 4.6 V9.4 C1.6 10.4 1 12 1.4 13.4 L3.2 12.4 L4.8 13.2 L4.6 15.2 C6.8 15.4 8.2 13 7.2 10.6 L6.6 9.6 V4.6 C7.6 3.4 7.2 1.6 5.6 1.2 Z" fill="#fff" stroke="#555" stroke-width="0.9" stroke-linejoin="round"/><rect x="9.4" y="1.2" width="7.6" height="3" fill="#c9b38a"/><rect x="10.2" y="4.2" width="6" height="3.6" fill="#f2f2f2" stroke="#555" stroke-width="0.8"/><rect x="11.4" y="7.8" width="3.6" height="7.4" fill="#2f6fc4" stroke="#3a3a3a" stroke-width="0.6"/><path d="M11.6 9.6 L14.8 11 M11.6 12 L14.8 13.4" stroke="#cfe2f8" stroke-width="0.8"/><rect x="12.4" y="5" width="1.6" height="1.6" fill="#2f6fc4"/></svg>
<svg style="left:446.5px;top:33.1px;overflow:visible" width="15" height="16" viewBox="0 0 15 16"><rect x="1.4" y="2.4" width="11.4" height="12.4" rx="1.2" fill="#fff" stroke="#666" stroke-width="1"/><rect x="4.6" y="0.8" width="5" height="3" rx="0.8" fill="#fff" stroke="#666" stroke-width="0.9"/><path d="M3.4 6.4 h1.4 M3.4 9 h1.4 M3.4 11.6 h1.4" stroke="#3f8fe6" stroke-width="1.1"/><path d="M6 6.4 h4.8 M6 9 h4.8 M6 11.6 h4.8" stroke="#8a8a8a" stroke-width="0.9"/></svg>
<svg style="left:480.5px;top:33.1px;overflow:visible" width="16" height="16" viewBox="0 0 16 16"><path d="M1.5 1 V14.2" fill="none" stroke="#9a9a9a" stroke-width="1"/><path d="M1 14.3 H14.8" stroke="#d9a57a" stroke-width="0.9"/><rect x="2.8" y="5.6" width="2" height="8.3" fill="#d6e8fa" stroke="#7ab2ee" stroke-width="0.5"/><rect x="5.3" y="4.4" width="2" height="9.5" fill="#fdf0e2" stroke="#efc094" stroke-width="0.5"/><rect x="7.9" y="2.6" width="3" height="11.3" fill="#a9d0f6" stroke="#4a95e6" stroke-width="0.6"/><rect x="11.4" y="7" width="2.5" height="6.9" fill="#f9d9b8" stroke="#e8a866" stroke-width="0.6"/></svg>
<svg style="left:512.5px;top:33.1px;overflow:visible" width="17" height="16" viewBox="0 0 17 16"><rect x="0.9" y="1.8" width="14.6" height="12.8" fill="#fff" stroke="#585858" stroke-width="0.9"/><path d="M0.9 4 H15.5" stroke="#585858" stroke-width="0.8"/><path d="M3.8 0.8 V2.6 M12.6 0.8 V2.6" stroke="#585858" stroke-width="0.9"/><path d="M3.4 10.6 V8.4 M5 10.6 V7.4 M6.6 10.6 V7 M8.2 10.6 V7.8 M9.8 10.6 V6.8 M11.4 10.6 V7.2 M13 10.6 V7" stroke="#2f7fdc" stroke-width="0.95"/><path d="M2.8 9.3 H13.6" stroke="#5a9fe8" stroke-width="0.9"/><path d="M3 12.6 H13.6" stroke="#f3ddd0" stroke-width="1"/></svg>
<svg style="left:541px;top:33.0px;overflow:visible" width="18" height="16" viewBox="0 0 18 16"><path d="M1.8 1.5 H11.8 L15.4 5.2 L11.8 9 H1.8 Z" fill="#fff" stroke="#626262" stroke-width="0.9" stroke-linejoin="round"/><text x="2.2" y="14.9" font-family="Liberation Sans" font-weight="bold" font-size="5.6" fill="#222" textLength="8.6" lengthAdjust="spacingAndGlyphs">XN</text><circle cx="14" cy="12.6" r="2.3" fill="#118a1f"/></svg>
<svg style="left:567px;top:33.2px;overflow:visible" width="13.6" height="16.6" viewBox="0 0 13.6 16.6"><path d="M0.6 0.6 H6.199999999999999 L9.0 3.4 V13.0 H0.6 Z" fill="#fff" stroke="#7a7a7a" stroke-width="0.9" stroke-linejoin="round"/><path d="M6.199999999999999 0.6 V3.4 H9.0" fill="none" stroke="#7a7a7a" stroke-width="0.7200000000000001"/><path d="M2 10.6 L4.2 12.8 M4.2 12.8 V10.8 M4.2 12.8 H2.2" stroke="#e0486e" stroke-width="0.9" fill="none"/></svg>
<svg style="left:573px;top:39.6px;overflow:visible" width="10" height="10" viewBox="0 0 10 10"><rect x="0.6" y="0.6" width="8" height="7.9" rx="0.8" fill="#f3f3f3" stroke="#7a7a7a" stroke-width="0.9"/><rect x="2.4" y="2.3" width="4.4" height="4.5" fill="#bdbdbd"/></svg>
<svg style="left:591.5px;top:33.2px;overflow:visible" width="10" height="14" viewBox="0 0 10 14"><rect x="0.6" y="0.6" width="8" height="12.4" rx="0.8" fill="#e9e9e9" stroke="#8a8a8a" stroke-width="0.9"/><rect x="2.2" y="2.2" width="4.8" height="5.6" fill="#b5b5b5"/><path d="M2.4 11.6 H5.2 M4 10.4 L5.3 11.6 L4 12.8" stroke="#3aa66a" stroke-width="0.9" fill="none"/></svg>
<svg style="left:598.6px;top:38.2px;overflow:visible" width="12" height="13" viewBox="0 0 12 13"><path d="M0.6 0.6 H4.8 L7.4 3.1999999999999997 V9.4 H0.6 Z" fill="#fafafa" stroke="#5a5a5a" stroke-width="0.9" stroke-linejoin="round"/><path d="M4.8 0.6 V3.1999999999999997 H7.4" fill="none" stroke="#5a5a5a" stroke-width="0.7200000000000001"/></svg>
<svg style="left:621.5px;top:33.6px;overflow:visible" width="14" height="16" viewBox="0 0 14 16"><path d="M2.2 0.9 H8.2 L11.5 4.1 V12.8 Q11.5 14.2 10.1 14.2 H2.2 Q0.9 14.2 0.9 12.8 V2.2 Q0.9 0.9 2.2 0.9 Z" fill="#fff" stroke="#e2665f" stroke-width="0.95"/><path d="M3.4 8.6 C5.4 7.6 6.6 5.4 6.4 3.6 C6 2.8 5.4 3.4 5.6 4.4 C6 6.4 7.6 7.8 9.6 8 C10.4 7.6 9.6 7.2 8.6 7.4 C6.6 7.6 4.6 8.2 3.4 8.6 Z" fill="none" stroke="#e0625c" stroke-width="0.7"/><rect x="4" y="10.6" width="4.6" height="1.8" fill="#555"/></svg>
<svg style="left:652px;top:33.800000000000004px;overflow:visible" width="15.6" height="17.4" viewBox="0 0 15.6 17.4"><path d="M0.6 0.6 H7.699999999999999 L11.0 3.9 V13.8 H0.6 Z" fill="#fff" stroke="#c6c6c6" stroke-width="0.8" stroke-linejoin="round"/><path d="M7.699999999999999 0.6 V3.9 H11.0" fill="none" stroke="#c6c6c6" stroke-width="0.6400000000000001"/><path d="M8 4.6 H9.8 M8 6.8 H9.8 M8 9 H9.8" stroke="#d2e6d6" stroke-width="1.2"/></svg>
<svg style="left:649.5px;top:38.2px;overflow:visible" width="8" height="8" viewBox="0 0 8 8"><rect x="0.3" y="0.3" width="7" height="7" rx="0.7" fill="#1d7044"/><path d="M2.2 2 L5.4 5.6 M5.4 2 L2.2 5.6" stroke="#fff" stroke-width="1"/></svg>
<svg style="left:684px;top:34.2px;overflow:visible" width="16" height="16" viewBox="0 0 16 16"><path d="M0.6 0.6 H8.1 L11.4 3.9 V12.4 H0.6 Z" fill="#fff" stroke="#d5d5d5" stroke-width="0.8" stroke-linejoin="round"/><path d="M8.1 0.6 V3.9 H11.4" fill="none" stroke="#d5d5d5" stroke-width="0.6400000000000001"/><path d="M8 4.6 H10 M8 6.8 H10 M8 9 H10" stroke="#dbe3f6" stroke-width="1.2"/></svg>
<svg style="left:682.5px;top:38.6px;overflow:visible" width="8" height="8" viewBox="0 0 8 8"><rect x="0.3" y="0.3" width="7" height="6.8" rx="0.7" fill="#2b55b8"/><path d="M1.6 2.2 L2.6 5.2 L3.8 2.8 L5 5.2 L6 2.2" stroke="#dfe8fb" stroke-width="0.8" fill="none"/></svg>
<svg style="left:21px;top:79.5px;overflow:visible" width="14" height="13" viewBox="0 0 14 13"><path d="M0.8 2.4 Q0.8 1.2 1.9 1.2 H4.8 L6.2 2.6 H11 Q12 2.6 12 3.6 V10.4 Q12 11.4 11 11.4 H1.8 Q0.8 11.4 0.8 10.4 Z" fill="#fff6e0" stroke="#f2a343" stroke-width="0.8"/><path d="M1 4.8 H12.4 V10.3 Q12.4 11.3 11.4 11.3 H1.9 Q1 11.3 1 10.3 Z" fill="#fbd066" stroke="#f4b24c" stroke-width="0.5"/><circle cx="10.5" cy="9.6" r="2.6" fill="#fff" stroke="#3f8fe6" stroke-width="0.8"/><rect x="10.1" y="9" width="0.8" height="2" fill="#3f8fe6"/><circle cx="10.5" cy="8.1" r="0.45" fill="#3f8fe6"/></svg>
<svg style="left:21px;top:238.6px;overflow:visible" width="11" height="11" viewBox="0 0 11 11"><rect x="0.8" y="0.8" width="9" height="9" rx="1" fill="#fbfbfb" stroke="#7d7d7d" stroke-width="0.9"/><path d="M7.6 2.2 L3 8.2" stroke="#2c2c2c" stroke-width="0.9"/><rect x="2.1" y="2.3" width="2.3" height="2.3" fill="#2f7fdc"/><rect x="6.1" y="5.9" width="2.3" height="2.3" fill="#2f7fdc"/></svg>
<svg style="left:35.3px;top:238.6px;overflow:visible" width="9" height="9" viewBox="0 0 9 9"><circle cx="4.5" cy="4.3" r="3.5" fill="#fdfeff" stroke="#86b9ee" stroke-width="0.8"/><rect x="4.1" y="3.7" width="0.8" height="2.6" fill="#6aa6e6"/><circle cx="4.5" cy="2.6" r="0.5" fill="#6aa6e6"/></svg>
</div></body></html>
